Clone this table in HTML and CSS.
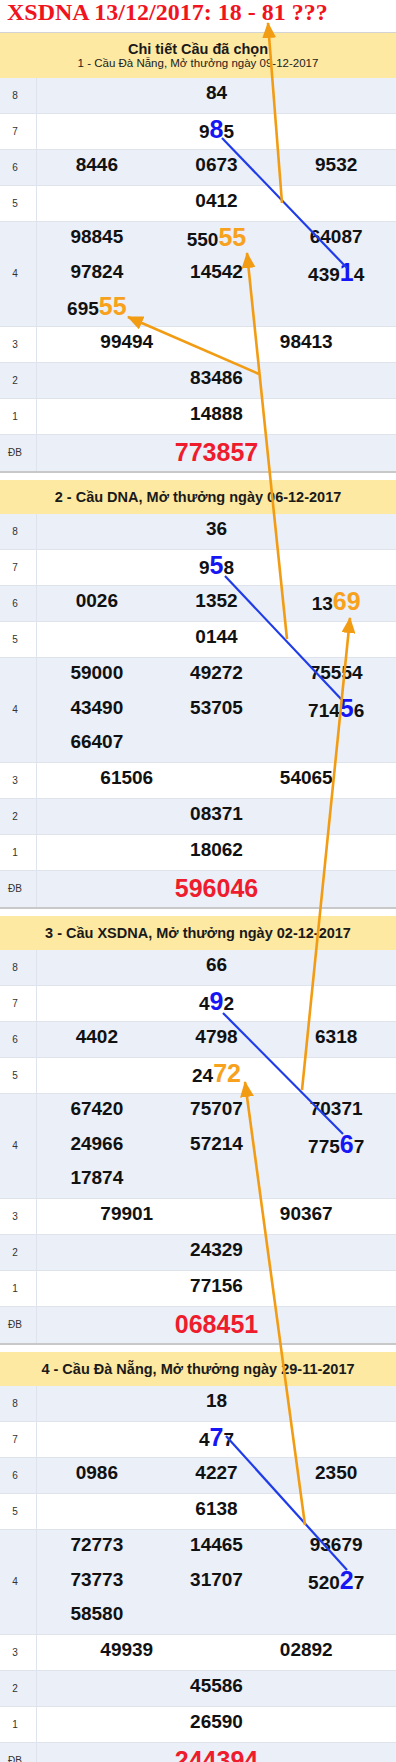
FILE: index.html
```html
<!DOCTYPE html>
<html lang="vi">
<head>
<meta charset="utf-8">
<title>XSDNA 13/12/2017</title>
<link rel="stylesheet" href="styles.css">
</head>
<body>
<div class="page">
  <h1 class="title">XSDNA 13/12/2017: 18 - 81 ???</h1>

  <section class="card card--first">
    <div class="head head--main">
      <div class="head-title">Chi tiết Cầu đã chọn</div>
      <div class="head-sub">1 - Cầu Đà Nẵng, Mở thưởng ngày 09-12-2017</div>
    </div>
    <div class="row alt"><div class="lbl">8</div><div class="vals"><div class="num">84</div></div></div>
    <div class="row"><div class="lbl">7</div><div class="vals"><div class="num">9<span class="hb">8</span>5</div></div></div>
    <div class="row alt"><div class="lbl">6</div><div class="vals three"><div class="num">8446</div><div class="num">0673</div><div class="num">9532</div></div></div>
    <div class="row"><div class="lbl">5</div><div class="vals"><div class="num">0412</div></div></div>
    <div class="row alt tall"><div class="lbl">4</div><div class="vals three">
      <div class="col"><div class="num">98845</div><div class="num">97824</div><div class="num">695<span class="ho">55</span></div></div>
      <div class="col"><div class="num">550<span class="ho">55</span></div><div class="num">14542</div></div>
      <div class="col"><div class="num">64087</div><div class="num">439<span class="hb">1</span>4</div></div>
    </div></div>
    <div class="row"><div class="lbl">3</div><div class="vals two"><div class="num">99494</div><div class="num">98413</div></div></div>
    <div class="row alt"><div class="lbl">2</div><div class="vals"><div class="num">83486</div></div></div>
    <div class="row"><div class="lbl">1</div><div class="vals"><div class="num">14888</div></div></div>
    <div class="row alt last"><div class="lbl">ĐB</div><div class="vals"><div class="num db">773857</div></div></div>
  </section>

  <section class="card">
    <div class="head">2 - Cầu DNA, Mở thưởng ngày 06-12-2017</div>
    <div class="row alt"><div class="lbl">8</div><div class="vals"><div class="num">36</div></div></div>
    <div class="row"><div class="lbl">7</div><div class="vals"><div class="num">9<span class="hb">5</span>8</div></div></div>
    <div class="row alt"><div class="lbl">6</div><div class="vals three"><div class="num">0026</div><div class="num">1352</div><div class="num">13<span class="ho">69</span></div></div></div>
    <div class="row"><div class="lbl">5</div><div class="vals"><div class="num">0144</div></div></div>
    <div class="row alt tall"><div class="lbl">4</div><div class="vals three">
      <div class="col"><div class="num">59000</div><div class="num">43490</div><div class="num">66407</div></div>
      <div class="col"><div class="num">49272</div><div class="num">53705</div></div>
      <div class="col"><div class="num">75554</div><div class="num">714<span class="hb">5</span>6</div></div>
    </div></div>
    <div class="row"><div class="lbl">3</div><div class="vals two"><div class="num">61506</div><div class="num">54065</div></div></div>
    <div class="row alt"><div class="lbl">2</div><div class="vals"><div class="num">08371</div></div></div>
    <div class="row"><div class="lbl">1</div><div class="vals"><div class="num">18062</div></div></div>
    <div class="row alt last"><div class="lbl">ĐB</div><div class="vals"><div class="num db">596046</div></div></div>
  </section>

  <section class="card">
    <div class="head">3 - Cầu XSDNA, Mở thưởng ngày 02-12-2017</div>
    <div class="row alt"><div class="lbl">8</div><div class="vals"><div class="num">66</div></div></div>
    <div class="row"><div class="lbl">7</div><div class="vals"><div class="num">4<span class="hb">9</span>2</div></div></div>
    <div class="row alt"><div class="lbl">6</div><div class="vals three"><div class="num">4402</div><div class="num">4798</div><div class="num">6318</div></div></div>
    <div class="row"><div class="lbl">5</div><div class="vals"><div class="num">24<span class="ho">72</span></div></div></div>
    <div class="row alt tall"><div class="lbl">4</div><div class="vals three">
      <div class="col"><div class="num">67420</div><div class="num">24966</div><div class="num">17874</div></div>
      <div class="col"><div class="num">75707</div><div class="num">57214</div></div>
      <div class="col"><div class="num">70371</div><div class="num">775<span class="hb">6</span>7</div></div>
    </div></div>
    <div class="row"><div class="lbl">3</div><div class="vals two"><div class="num">79901</div><div class="num">90367</div></div></div>
    <div class="row alt"><div class="lbl">2</div><div class="vals"><div class="num">24329</div></div></div>
    <div class="row"><div class="lbl">1</div><div class="vals"><div class="num">77156</div></div></div>
    <div class="row alt last"><div class="lbl">ĐB</div><div class="vals"><div class="num db">068451</div></div></div>
  </section>

  <section class="card">
    <div class="head">4 - Cầu Đà Nẵng, Mở thưởng ngày 29-11-2017</div>
    <div class="row alt"><div class="lbl">8</div><div class="vals"><div class="num">18</div></div></div>
    <div class="row"><div class="lbl">7</div><div class="vals"><div class="num">4<span class="hb">7</span>7</div></div></div>
    <div class="row alt"><div class="lbl">6</div><div class="vals three"><div class="num">0986</div><div class="num">4227</div><div class="num">2350</div></div></div>
    <div class="row"><div class="lbl">5</div><div class="vals"><div class="num">6138</div></div></div>
    <div class="row alt tall"><div class="lbl">4</div><div class="vals three">
      <div class="col"><div class="num">72773</div><div class="num">73773</div><div class="num">58580</div></div>
      <div class="col"><div class="num">14465</div><div class="num">31707</div></div>
      <div class="col"><div class="num">93679</div><div class="num">520<span class="hb">2</span>7</div></div>
    </div></div>
    <div class="row"><div class="lbl">3</div><div class="vals two"><div class="num">49939</div><div class="num">02892</div></div></div>
    <div class="row alt"><div class="lbl">2</div><div class="vals"><div class="num">45586</div></div></div>
    <div class="row"><div class="lbl">1</div><div class="vals"><div class="num">26590</div></div></div>
    <div class="row alt last"><div class="lbl">ĐB</div><div class="vals"><div class="num db">244394</div></div></div>
  </section>

  <svg class="overlay" width="396" height="1762" viewBox="0 0 396 1762" aria-hidden="true">
    <defs>
      <marker id="ah" markerUnits="userSpaceOnUse" markerWidth="16" markerHeight="14" refX="15" refY="7" orient="auto">
        <path d="M0,0 L16,7 L0,14 z" fill="#f29c14"/>
      </marker>
    </defs>
    <g stroke="#1f3ce8" stroke-width="2.2" fill="none">
      <line x1="222" y1="138" x2="347" y2="268"/>
      <line x1="225" y1="576" x2="342" y2="700"/>
      <line x1="223" y1="1013" x2="343" y2="1134"/>
      <line x1="226" y1="1436" x2="347" y2="1570"/>
    </g>
    <g stroke="#f29c14" stroke-width="2.6" fill="none" marker-end="url(#ah)">
      <line x1="282" y1="203" x2="268" y2="23"/>
      <line x1="287" y1="639" x2="247" y2="253"/>
      <line x1="259" y1="374" x2="128" y2="317"/>
      <line x1="302" y1="1090" x2="350" y2="618"/>
      <line x1="305" y1="1525" x2="245" y2="1082"/>
    </g>
  </svg>
</div>
</body>
</html>
```
FILE: styles.css
```css
* { box-sizing: border-box; }

html, body {
  margin: 0;
  padding: 0;
  background: #ffffff;
}

body {
  font-family: "Liberation Sans", Arial, sans-serif;
  color: #111;
}

.page {
  position: relative;
  width: 396px;
}

.title {
  margin: 0;
  padding: 0 0 8px 7px;
  font-family: "Liberation Serif", "Times New Roman", serif;
  font-weight: bold;
  font-size: 24px;
  line-height: 24px;
  color: #f0141e;
  white-space: nowrap;
}

.card {
  margin-bottom: 7px;
}

.card--first {
  border-top: 1px solid #d3d3d3;
}

.head {
  background: #fde9a1;
  text-align: center;
  font-weight: bold;
  font-size: 14.5px;
  line-height: 34px;
  height: 34px;
  color: #1a1a1a;
}

.head--main {
  height: 45px;
  line-height: normal;
  padding-top: 9px;
}

.head-title {
  font-size: 14.5px;
  line-height: 15px;
  font-weight: bold;
}

.head-sub {
  font-size: 11.5px;
  line-height: 13px;
  font-weight: normal;
  color: #222;
}

.row {
  display: grid;
  grid-template-columns: 37px 1fr;
  border-bottom: 1px solid #dfe4ec;
  background: #ffffff;
}

.row.alt {
  background: #eaeff8;
}

.row.last {
  border-bottom: 2px solid #c8c8c8;
}

.lbl {
  display: flex;
  align-items: center;
  justify-content: center;
  padding-right: 6px;
  font-size: 10px;
  color: #333;
  border-right: 1px solid #dfe4ec;
}

.vals {
  display: grid;
  grid-template-columns: 1fr;
}

.vals.two {
  grid-template-columns: 1fr 1fr;
}

.vals.three {
  grid-template-columns: 1fr 1fr 1fr;
}

.col {
  display: flex;
  flex-direction: column;
}

.num {
  height: 35px;
  text-align: center;
  font-weight: bold;
  font-size: 19px;
  line-height: 29px;
  padding-bottom: 6px;
  color: #111;
  white-space: nowrap;
}

.tall .num {
  height: 34.67px;
  padding-bottom: 5.67px;
}

.num.db {
  height: 36px;
  font-size: 25px;
  color: #ee1c2c;
  padding-top: 3px;
  padding-bottom: 4px;
}

.hb,
.ho {
  font-size: 25px;
  line-height: 31px;
}

.hb {
  color: #1616f5;
}

.ho {
  color: #f7a11c;
}

.overlay {
  position: absolute;
  top: 0;
  left: 0;
  pointer-events: none;
}
```
